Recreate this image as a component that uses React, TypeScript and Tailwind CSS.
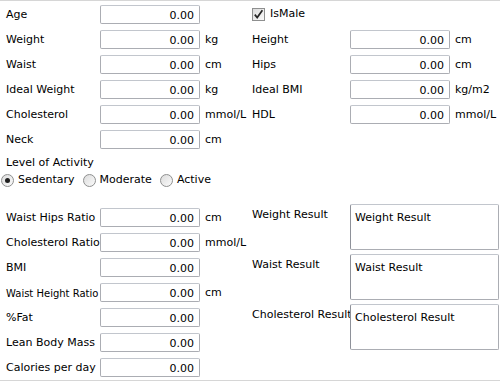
import React from "react";

const font = { fontFamily: '"DejaVu Sans", Verdana, sans-serif' };

const NumBox = () => (
  <div className="w-[100px] h-[19px] shrink-0 border border-[#abadb3] border-t-[#c2c6cd] rounded-[2px] bg-white text-right pr-[5px] leading-[19px] text-[11px] text-black">
    0.00
  </div>
);

const Row = ({
  label,
  unit,
  small,
  right,
}: {
  label: string;
  unit?: string;
  small?: boolean;
  right?: boolean;
}) => (
  <div className="flex h-[25px] items-center">
    <div
      className={`${right ? "w-[98px]" : "w-[94px]"} shrink-0 pt-[2px] whitespace-nowrap ${small ? "text-[10px]" : "text-[11px]"}`}
    >
      {label}
    </div>
    <NumBox />
    {unit && <div className="pl-[5px] pt-[1px] whitespace-nowrap">{unit}</div>}
  </div>
);

const Radio = ({ checked, label }: { checked?: boolean; label: string }) => (
  <div className="flex items-center gap-[4px] mr-[8px]">
    <div className="w-[13px] h-[13px] rounded-full border border-[#8e8f8f] bg-gradient-to-br from-[#dcdcdc] to-[#fbfbfb] flex items-center justify-center">
      {checked && <div className="w-[5px] h-[5px] rounded-full bg-[#1f1f1f]" />}
    </div>
    <span>{label}</span>
  </div>
);

const ResultBox = ({ label }: { label: string }) => (
  <div className="flex h-[45px] mb-[5px] items-start">
    <div className="w-[98px] shrink-0 leading-[22px] whitespace-nowrap">{label}</div>
    <div className="w-[149px] h-[46px] border border-[#abadb3] border-t-[#c2c6cd] border-l-[#8e9199] rounded-[2px] bg-white pl-[4px] pt-[5px] text-[11px] leading-[16px]">
      {label}
    </div>
  </div>
);

export default function App() {
  return (
    <div
      style={font}
      className="w-[500px] h-[381px] bg-white text-[11px] text-black border-t border-b border-[#d6d6d6] overflow-hidden"
    >
      <div className="flex pt-[1px]">
        <div className="w-[250px] pl-[6px] shrink-0">
          <Row label="Age" />
          <Row label="Weight" unit="kg" />
          <Row label="Waist" unit="cm" />
          <Row label="Ideal Weight" unit="kg" />
          <Row label="Cholesterol" unit="mmol/L" />
          <Row label="Neck" unit="cm" />
        </div>
        <div className="pl-[2px]">
          <div className="flex h-[25px] items-center gap-[5px]">
            <div className="w-[13px] h-[13px] border border-[#8e8f8f] bg-gradient-to-br from-[#dcdcdc] to-[#fafafa] flex items-center justify-center">
              <svg width="11" height="11" viewBox="0 0 11 11">
                <path d="M1.8 5.6 L4.2 8.6 L9.4 1.2" fill="none" stroke="#262626" strokeWidth="1.7" />
              </svg>
            </div>
            <span>IsMale</span>
          </div>
          <Row label="Height" unit="cm" right />
          <Row label="Hips" unit="cm" right />
          <Row label="Ideal BMI" unit="kg/m2" right />
          <Row label="HDL" unit="mmol/L" right />
        </div>
      </div>

      <div className="pt-[3px]">
        <div className="pl-[6px] leading-[16px]">Level of Activity</div>
        <div className="flex items-center h-[18px] pl-[1px]">
          <Radio checked label="Sedentary" />
          <Radio label="Moderate" />
          <Radio label="Active" />
        </div>
      </div>

      <div className="flex pt-[15px]">
        <div className="w-[250px] pl-[6px] pt-[1px] shrink-0">
          <Row label="Waist Hips Ratio" unit="cm" />
          <Row label="Cholesterol Ratio" unit="mmol/L" />
          <Row label="BMI" />
          <Row label="Waist Height Ratio" unit="cm" small />
          <Row label="%Fat" />
          <Row label="Lean Body Mass" />
          <Row label="Calories per day" />
        </div>
        <div className="pl-[2px]">
          <ResultBox label="Weight Result" />
          <ResultBox label="Waist Result" />
          <ResultBox label="Cholesterol Result" />
        </div>
      </div>
    </div>
  );
}
